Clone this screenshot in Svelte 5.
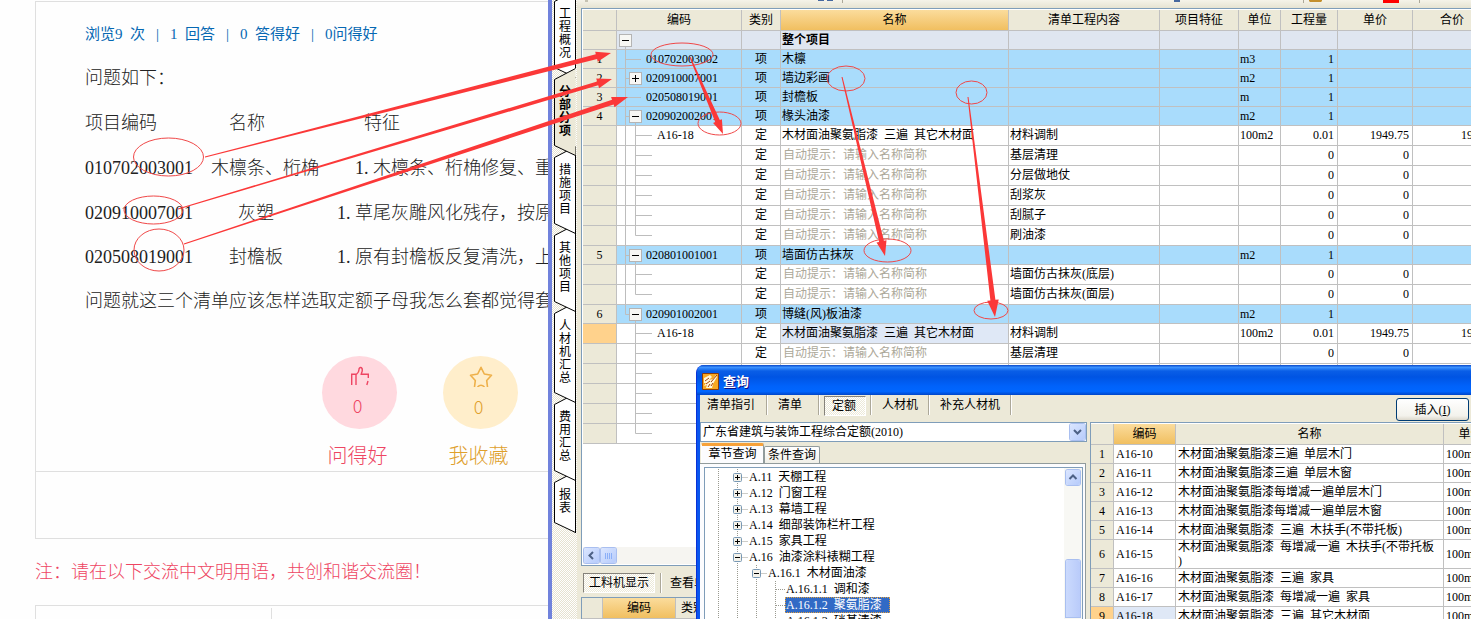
<script>
  const stats = ['浏览9  次', '1  回答', '0  答得好', '0问得好'];

  // A half-width space is half an em, two ordinary spaces of the Latin face.
  const sp = (n) => '\u00a0'.repeat(n * 2);
  const lines = [
    '问题如下：',
    '项目编码' + sp(8) + '名称' + sp(11) + '特征',
    '010702003001' + sp(2) + '木檩条、桁桷' + sp(4) + '1. 木檩条、桁桷修复、重',
    '020910007001' + sp(5) + '灰塑' + sp(7) + '1. 草尾灰雕风化残存，按原',
    '020508019001' + sp(4) + '封檐板' + sp(6) + '1. 原有封檐板反复清洗，上',
    '问题就这三个清单应该怎样选取定额子母我怎么套都觉得套'
  ];

  const sideTabs = ['工程概况', '分部分项', '措施项目', '其他项目', '人材机汇总', '费用汇总', '报表'];
  const activeTab = 1;
  const tabHeight = (t) => t.length * 13 + 15;

  const hint = '自动提示：请输入名称简称';
  const woodPaint = '木材面油聚氨脂漆  三遍  其它木材面';
  const item = (no, code, name, unit, tree) => ({ kind: 'item', no, code, type: '项', name, unit, qty: '1', tree });
  const sub = (content, tree, more = {}) => ({ kind: 'sub', type: '定', name: hint, hint: true, content, qty: '0', price: '0', tree, ...more });
  const quota = { code: 'A16-18', name: woodPaint, hint: false, unit: '100m2', qty: '0.01', price: '1949.75', total: '19.50' };
  const blank = (tree) => ({ kind: 'sub', name: '', tree });

  const rows = [
    { kind: 'root', name: '整个项目', tree: 'root' },
    item('1', '010702003002', '木檩', 'm3', 'leaf'),
    item('2', '020910007001', '墙边彩画', 'm2', 'plus'),
    item('3', '020508019001', '封檐板', 'm', 'leaf'),
    item('4', '020902002001', '椽头油漆', 'm2', 'minus'),
    sub('材料调制', 'child', quota),
    sub('基层清理', 'child'),
    sub('分层做地仗', 'child'),
    sub('刮浆灰', 'child'),
    sub('刮腻子', 'child'),
    sub('刷油漆', 'childEnd'),
    item('5', '020801001001', '墙面仿古抹灰', 'm2', 'minus'),
    sub('墙面仿古抹灰(底层)', 'child'),
    sub('墙面仿古抹灰(面层)', 'childEnd'),
    item('6', '020901002001', '博缝(风)板油漆', 'm2', 'minusEnd'),
    sub('材料调制', 'lone', { ...quota, current: true }),
    sub('基层清理', 'lone'),
    blank('lone'),
    blank('lone'),
    blank('lone'),
    blank('loneEnd')
  ];

  const treeLines = {
    root: 'M8.5 14V20',
    leaf: 'M8.5 0V20M8.5 9.5H24',
    plus: 'M8.5 0V20M8.5 9.5H12',
    minus: 'M8.5 0V20M8.5 9.5H12M18.5 15V20',
    minusEnd: 'M8.5 0V9.5H12M18.5 15V20',
    child: 'M8.5 0V20M18.5 0V20M18.5 9.5H35',
    childEnd: 'M8.5 0V20M18.5 0V9.5H35',
    lone: 'M18.5 0V20M18.5 9.5H35',
    loneEnd: 'M18.5 0V9.5H35'
  };
  const boxAt = { root: 2, plus: 12, minus: 12, minusEnd: 12 };

  const queryTabs = ['清单指引', '清单', '定额', '人材机', '补充人材机'];

  const chapters = [
    { level: 1, open: false, text: 'A.11  天棚工程' },
    { level: 1, open: false, text: 'A.12  门窗工程' },
    { level: 1, open: false, text: 'A.13  幕墙工程' },
    { level: 1, open: false, text: 'A.14  细部装饰栏杆工程' },
    { level: 1, open: false, text: 'A.15  家具工程' },
    { level: 1, open: true, text: 'A.16  油漆涂料裱糊工程' },
    { level: 2, open: true, text: 'A.16.1  木材面油漆' },
    { level: 3, text: 'A.16.1.1  调和漆' },
    { level: 3, text: 'A.16.1.2  聚氨脂漆', selected: true },
    { level: 3, text: 'A.16.1.3  硝基清漆' }
  ];

  const quotas = [
    ['A16-10', '木材面油聚氨脂漆三遍  单层木门'],
    ['A16-11', '木材面油聚氨脂漆三遍  单层木窗'],
    ['A16-12', '木材面油聚氨脂漆每增减一遍单层木门'],
    ['A16-13', '木材面油聚氨脂漆每增减一遍单层木窗'],
    ['A16-14', '木材面油聚氨脂漆  三遍  木扶手(不带托板)'],
    ['A16-15', '木材面油聚氨脂漆  每增减一遍  木扶手(不带托板\n)'],
    ['A16-16', '木材面油聚氨脂漆  三遍  家具'],
    ['A16-17', '木材面油聚氨脂漆  每增减一遍  家具'],
    ['A16-18', '木材面油聚氨脂漆  三遍  其它木材面']
  ];

  const ellipses = [
    [168.5, 157, 35, 19], [153.5, 210, 29.5, 14], [159, 250, 25, 21],
    [682, 54.5, 31, 11.5], [719.5, 123.5, 21.5, 11.5], [846, 78.5, 19, 12.5],
    [971.5, 92.5, 15.5, 11.5], [887.5, 250.5, 23.5, 11.5], [991, 310.5, 17, 8.5]
  ];

  // Tapered arrow: thin at the tail, swept head at the tip.
  function arrow([x1, y1, x2, y2, w, head]) {
    const len = Math.hypot(x2 - x1, y2 - y1);
    const ux = (x2 - x1) / len, uy = (y2 - y1) / len;
    const at = (d, s) => `${(x1 + ux * d - uy * s).toFixed(1)},${(y1 + uy * d + ux * s).toFixed(1)}`;
    const neck = len - head;
    return [at(0, 0.5), at(neck, w / 2), at(neck, head * 0.34), at(len, 0),
      at(neck, -head * 0.34), at(neck, -w / 2), at(0, -0.5)].join(' ');
  }
  const arrows = [
    [205, 157, 611, 53, 5, 15], [178, 209, 612, 79, 4, 15], [184, 244, 628, 97, 5, 16],
    [690, 57, 723, 134, 5, 14], [842, 77, 885, 256, 5, 15], [968, 97, 995, 317, 5, 17]
  ];
</script>

<div class="desk">
  <main class="page">
    <section class="card">
      <div class="question">
        <p class="stats">
          {#each stats as s, i}
            {#if i}<span class="bar">|</span>{/if}<a href="#stats">{s}</a>
          {/each}
        </p>
        {#each lines as l}<p class="line">{l}</p>{/each}
      </div>
      <div class="votes">
        <button class="vote good">
          <span class="disc">
            <svg width="20" height="20" viewBox="0 0 20 20" fill="none" stroke="#ee4562" stroke-width="1.4">
              <path d="M1.7 19V8.300H6V19M6.500 8.300C8 7 9 5.500 9 3.400C9 .8 12.300 .8 12.300 4C12.300 6 11.400 7 11.200 8.300H18.300V12M18 15L16.800 19" />
            </svg>
            <b>0</b>
          </span>
          <span class="label">问得好</span>
        </button>
        <button class="vote fav">
          <span class="disc">
            <svg width="24" height="21" viewBox="0 0 24 21" fill="none" stroke="#eeb04a" stroke-width="1.600" stroke-linejoin="round">
              <path d="M5.500 21L6.300 14.500L1.500 9.300L8.700 8L12 1.300L15.300 8L22.500 9.300L17.700 14.500L18.500 21M8.500 21Q12 17.500 15.500 21" />
            </svg>
            <b>0</b>
          </span>
          <span class="label">我收藏</span>
        </button>
      </div>
      <div class="card-foot"></div>
    </section>
    <p class="note">注：请在以下交流中文明用语，共创和谐交流圈！</p>
    <section class="reply"><div></div></section>
  </main>

  <div class="app">
    <nav class="side">
      {#each sideTabs as t, i}
        {@const h = tabHeight(t)}
        <button class:on={i === activeTab} style="z-index: {i === activeTab ? 9 : 8 - i}">
          <svg width="22" height={h} viewBox="0 0 22 {h}">
            <path d="M21.500 -10.500L.5 .5V{h - 0.5}L21.500 {h + 9.5}" fill={i === activeTab ? '#ece9d8' : '#fff'} stroke="#000" />
            {#if i !== activeTab}<path d="M21.500 -10.500V{h + (i < activeTab ? 0 : 10)}" stroke="#000" />{/if}
          </svg>
          <span>{t}</span>
        </button>
      {/each}
    </nav>

    <div class="work">
      <div class="strip">
        <svg width="100%" height="8">
          <path d="M8 0h3v2h-3z" fill="#c5c2b2" />
          <path d="M241 0h6v1h-6zM250 0h6v1h-6zM597 0h6v2h-6z" fill="#46689f" />
          <path d="M265 0h1v3h-1zM726 0h1v3h-1zM842 0h1v3h-1z" fill="#aca899" />
          <path d="M732 0h13v1l-1 1h-11l-1-1z" fill="#c48f2c" />
          <path d="M806 0h16v3h-16z" fill="#f00" />
        </svg>
      </div>

      <div class="frame">
        <div class="scroller">
          <table class="bill">
            <colgroup>
              <col style="width:34px" /><col style="width:125px" /><col style="width:39px" /><col style="width:228px" /><col style="width:151px" />
              <col style="width:79px" /><col style="width:42px" /><col style="width:57px" /><col style="width:75px" /><col style="width:79px" />
            </colgroup>
            <thead>
              <tr>
                <th></th><th>编码</th><th>类别</th><th class="hot">名称</th><th>清单工程内容</th>
                <th>项目特征</th><th>单位</th><th>工程量</th><th>单价</th><th>合价</th>
              </tr>
            </thead>
            <tbody>
              {#each rows as r}
                <tr class={r.kind} class:current={r.current}>
                  <th>{r.no ?? ''}</th>
                  <td class="code">
                    <div>
                      <svg width="40" height="20" viewBox="0 0 40 20" fill="none">
                        <path d={treeLines[r.tree]} stroke="#bdbdbd" />
                        {#if r.tree in boxAt}
                          {@const x = boxAt[r.tree]}
                          <rect x={x + 0.5} y="3.500" width="12" height="12" fill="#f7f7f4" stroke="#b4b4b4" />
                          <path d={`M${x + 3} 9.500h7` + (r.tree === 'plus' ? `M${x + 6.5} 6v7` : '')} stroke="#000" />
                        {/if}
                      </svg>
                      <span class:item={r.kind === 'item'}>{r.code ?? ''}</span>
                    </div>
                  </td>
                  <td class="mid">{r.type ?? ''}</td>
                  <td class="name" class:hint={r.hint}>{r.name}</td>
                  <td>{r.content ?? ''}</td>
                  <td></td>
                  <td>{r.unit ?? ''}</td>
                  <td class="num">{r.qty ?? ''}</td>
                  <td class="num">{r.price ?? ''}</td>
                  <td class="num">{r.total ?? ''}</td>
                </tr>
              {/each}
            </tbody>
          </table>
        </div>
        <div class="hscroll">
          <button aria-label="左移"><svg width="15" height="15" fill="none" stroke="#4d6185" stroke-width="2"><path d="M9 4L5.500 7.500L9 11" /></svg></button>
          <button aria-label="滑块"><svg width="15" height="15"><path d="M4.500 5v6M6.500 5v6M8.500 5v6M10.500 5v6" stroke="#8cb0f8" /></svg></button>
        </div>
      </div>

      <div class="lower-bar">
        <button class="pressed">工料机显示</button>
        <i class="sep"></i>
        <button>查看单</button>
      </div>
      <table class="lower">
        <colgroup><col style="width:21px" /><col style="width:73px" /><col style="width:60px" /><col /></colgroup>
        <thead><tr><th></th><th class="hot">编码</th><th class="left">类别</th><th></th></tr></thead>
      </table>
    </div>

    <section class="dialog">
      <header>
        <svg width="17" height="17" viewBox="0 0 17 17">
          <rect width="17" height="17" rx="1" fill="#8a3b0a" />
          <rect x="1" y="1" width="15" height="15" fill="#f7a823" />
          <path d="M2 5l6-3 2 2-3 3 4-1 3-4 1 2-4 7-1 4H4l1-3-3 1 2-3H2z" fill="#fff6d8" />
          <path d="M3 8l4-3M4 11l4-3M6 14l2-3M9 9l6-7M9 13l2-3" stroke="#a5400c" />
        </svg>
        <h2>查询</h2>
      </header>
      <div class="dialog-body">
        <div class="dialog-bar">
          <nav>
            {#each queryTabs as q}<button class:pressed={q === '定额'}>{q}</button><i class="sep"></i>{/each}
          </nav>
          <button class="insert">插入(<u>I</u>)</button>
        </div>
        <div class="panes">
          <div class="left-pane">
            <label class="combo">
              <select aria-label="定额库"><option>广东省建筑与装饰工程综合定额(2010)</option></select>
              <span><svg width="15" height="16" fill="none" stroke="#4d6185" stroke-width="2"><path d="M4 6L7.500 9.500L11 6" /></svg></span>
            </label>
            <div class="tabs"><button class="on">章节查询</button><button>条件查询</button></div>
            <div class="tab-panel">
              <div class="tree">
                <ul>
                  {#each chapters as c, i}
                    {@const bx = 32.5 + (c.level - 1) * 19}
                    <li>
                      <svg width={c.level === 3 ? 80 : 43 + (c.level - 1) * 19} height="16" fill="none">
                        <path
                          d={'M13.500 0V16M32.500 0V16' + (c.level > 1 ? 'M51.500 0V16' : '') + (c.level === 3 ? 'M70.500 0V16M71 8.500H80' : `M${bx} 8.500h12`)}
                          stroke="#9a9a90" stroke-dasharray="1 1" />
                        {#if c.level < 3}
                          <rect x={bx - 4} y="4.500" width="8" height="8" rx="1" fill="#f4f2ea" stroke="#7898b5" />
                          <path d={`M${bx - 2.5} 8.500h5` + (c.open ? '' : `M${bx} 6v5`)} stroke="#000" />
                        {/if}
                      </svg>
                      <span class:selected={c.selected}>{c.text}</span>
                    </li>
                  {/each}
                </ul>
                <div class="vscroll">
                  <button aria-label="上移"><svg width="14" height="15" fill="none" stroke="#4d6185" stroke-width="2"><path d="M3.500 9L7 5.500L10.500 9" /></svg></button>
                  <div class="thumb"></div>
                </div>
              </div>
            </div>
          </div>
          <div class="right-pane">
            <table class="quota">
              <colgroup><col style="width:23px" /><col style="width:62px" /><col style="width:268px" /><col style="width:54px" /></colgroup>
              <thead><tr><th></th><th class="hot">编码</th><th>名称</th><th>单位</th></tr></thead>
              <tbody>
                {#each quotas as [code, name], i}
                  <tr class:current={i === 8}>
                    <th>{i + 1}</th><td>{code}</td><td class="wrap">{name}</td><td>100m2</td>
                  </tr>
                {/each}
              </tbody>
            </table>
          </div>
        </div>
      </div>
    </section>
  </div>

  <svg class="marks" aria-hidden="true">
    {#each ellipses as [cx, cy, rx, ry]}
      <ellipse {cx} {cy} {rx} {ry} fill="none" stroke="#f04848" />
    {/each}
    {#each arrows as a}<polygon points={arrow(a)} fill="#fb3838" />{/each}
  </svg>
</div>

<style>
  :global(body) { overflow: hidden; }
  * { box-sizing: border-box; }
  .desk {
    position: relative;
    display: grid;
    grid-template-columns: minmax(0, 548fr) minmax(0, 923fr);
    height: 100vh;
    overflow: hidden;
    font: 12px/16px "Liberation Serif", "Noto Sans CJK SC", serif;
    color: #000;
    background: #fff;
  }
  button {
    font: inherit;
    color: inherit;
    margin: 0;
    padding: 0;
    border: 0;
    background: none;
    white-space: nowrap;
  }
  p, h2, ul { margin: 0; padding: 0; }
  svg { display: block; flex: none; }

  /* question page */
  .page { overflow: hidden; padding: 1px 0 0 35px; background: #fefefe; color: #222; }
  .card { border: 1px solid #dfdfdf; border-right: 0; }
  .question { padding: 20px 0 0 49px; height: 345px; }
  .stats { display: flex; gap: 11px; font-size: 15px; line-height: 24px; margin-bottom: 10px; color: #0668b3; white-space: pre; }
  .stats a { color: inherit; text-decoration: none; }
  .line { font-size: 18px; line-height: 45px; height: 45px; white-space: nowrap; font-weight: 300; }
  .question .line:nth-of-type(n + 6) { margin-top: -1px; }
  .votes { display: flex; gap: 46px; padding: 9px 0 0 286px; height: 125px; border-bottom: 1px solid #dfdfdf; }
  .vote { display: flex; flex-direction: column; align-items: center; width: 75px; font-size: 20px; line-height: 30px; gap: 12px; font-weight: 300; }
  .disc { display: flex; flex-direction: column; align-items: center; gap: 5px; width: 75px; height: 75px; border-radius: 50%; padding-top: 10px; }
  .disc b { font: 300 18px/28px "Noto Sans CJK SC", sans-serif; }
  .disc b, .label { margin-right: 4px; }
  .good { color: #ee4562; }
  .good .disc { background: #ffd9df; }
  .fav { color: #dfa02c; }
  .fav .disc { background: #ffeecb; }
  .card-foot { height: 66px; }
  .note { font-size: 18px; line-height: 66px; color: #ee4562; white-space: nowrap; font-weight: 300; }
  .reply { border: 1px solid #dfdfdf; border-right: 0; padding-top: 2px; height: 60px; }
  .reply div { width: 236px; height: 100%; border-right: 1px solid #dfdfdf; }

  /* estimating program */
  .app { position: relative; display: flex; background: #ece9d8; overflow: hidden; }
  .side {
    flex: none;
    display: flex;
    flex-direction: column;
    gap: 11px;
    width: 29px;
    padding: 1px 0 0 2px;
    border-left: 4px solid #7082dc;
    background: repeating-conic-gradient(#e6e2d0 0 25%, #fff 0 50%) 0 0 / 2px 2px;
  }
  .side button { position: relative; display: block; padding: 7px 0 8px 5px; text-align: left; width: 22px; }
  .side button svg { position: absolute; left: 0; top: 0; overflow: visible; }
  .side button span { position: relative; display: block; width: 13px; line-height: 13px; white-space: normal; word-break: break-all; }
  .side .on { font-weight: 700; }
  .work { flex: 1; min-width: 0; display: flex; flex-direction: column; }
  .strip { height: 8px; background: linear-gradient(#f5f3e9, #e6e3d2); }
  .frame { margin-left: 4px; border: 1px solid #7f9db9; border-right: 0; padding: 1px 0 1px 1px; background: #fff; }
  .scroller { overflow: hidden; height: 537px; }
  table { border-spacing: 0; table-layout: fixed; }
  th, td { padding: 0 1px; height: 19px; border: 0 solid #c0c0c0; border-width: 0 1px 1px 0; font-weight: 400; line-height: 17px; overflow: hidden; white-space: pre; text-align: left; }
  th { background: #ece9d8; text-align: center; }
  thead th { height: 21px; }
  thead .hot { background: linear-gradient(#fbdc9c, #f1bf60); }
  .bill { width: 909px; }
  .code { padding: 0; }
  .code div { display: flex; height: 18px; overflow: hidden; }
  .code span { line-height: 18px; }
  .code .item { margin-left: -11px; }
  .root td { background: #dfe6f0; font-weight: 700; }
  .item td { background: #a9dcfc; }
  .sub th, .sub td { height: 20px; }
  .sub .code div { height: 19px; }
  .mid { text-align: center; }
  td.hint { color: #aca899; padding-left: 2px; }
  .num { text-align: right; padding-right: 3px; }
  .current th { background: #ffd28c; }
  .bill .current .name, .quota .current td:nth-child(2) { background: #dfe8f6; }
  .hscroll { display: flex; gap: 2px; padding: 1px; height: 17px; background: #f6f5f1; }
  .hscroll button, .vscroll button, .combo span { background: linear-gradient(135deg, #dbe6ff, #b6cbfb); border-radius: 2px; box-shadow: 0 0 0 1px #a9bff0; }
  .hscroll button { height: 15px; }
  .lower-bar { display: flex; align-items: center; gap: 5px; height: 31px; padding: 6px 0 3px 6px; }
  .pressed { border: 1px solid; border-color: #85827a #fff #fff #85827a; background: repeating-conic-gradient(#ece9d8 0 25%, #fff 0 50%) 0 0 / 2px 2px; }
  .lower-bar .pressed { height: 20px; padding: 0 5px; }
  .sep { width: 2px; height: 20px; border-left: 1px solid #aca899; background: #fff; }
  .lower-bar .sep { margin-right: 3px; }
  .lower { width: 100%; margin-left: 4px; border: solid #7f9db9; border-width: 1px 0 0 1px; }
  .lower .left { text-align: left; padding-left: 5px; }

  /* query window */
  .dialog {
    position: absolute;
    z-index: 20;
    left: 148px;
    top: 365px;
    right: 0;
    bottom: 0;
    display: flex;
    flex-direction: column;
    border-left: 1px solid #0831d9;
    border-top-left-radius: 8px;
    background: #0a56ee;
    overflow: hidden;
  }
  .dialog header { flex: none; display: flex; align-items: center; gap: 4px; height: 30px; padding: 2px 0 0 5px; background: linear-gradient(#0a48c8, #3c92ff 8%, #0a5ee6 20%, #0054e3 40%, #0062fa 70%, #0066ff 88%, #0045c8); }
  h2 { font: 700 13px/20px "Noto Sans CJK SC", sans-serif; color: #fff; text-shadow: 1px 1px #0f1089; }
  .dialog-body { flex: 1; min-height: 0; display: flex; flex-direction: column; margin-left: 3px; background: #ece9d8; }
  .dialog-bar { flex: none; display: flex; justify-content: space-between; height: 27px; padding-right: 2px; }
  nav { display: flex; }
  .dialog-bar nav button { height: 20px; padding: 0 10px; }
  .dialog-bar nav button:first-child { padding-left: 7px; padding-right: 11px; }
  .dialog-bar nav button:nth-of-type(2) { padding-right: 16px; padding-left: 10px; }
  .dialog-bar nav .pressed { padding: 0 8px 0 6px; margin: 1px 4px 0 4px; height: 20px; width: 42px; }
  .insert { width: 73px; height: 23px; margin-top: 3px; border: 1px solid #003c74; border-radius: 3px; background: linear-gradient(#fff, #f3f2ec 80%, #dcd8cc); }
  .panes { flex: 1; min-height: 0; display: flex; gap: 3px; }
  .left-pane { flex: 0 0 387px; min-width: 0; display: flex; flex-direction: column; }
  .combo { position: relative; flex: none; display: block; height: 20px; }
  .combo select { width: 100%; height: 20px; padding: 0 2px; font: inherit; line-height: 18px; color: #000; appearance: none; border: 1px solid #7f9db9; border-radius: 0; background: #fff; }
  .combo span { position: absolute; right: 2px; top: 2px; pointer-events: none; }
  .tabs { flex: none; display: flex; align-items: flex-end; height: 21px; padding-left: 1px; }
  .tabs button { width: 56px; height: 17px; border: 1px solid #919b9c; border-bottom: 0; border-radius: 2px 2px 0 0; background: linear-gradient(#fff, #f0efe8); line-height: 16px; }
  .tabs .on { width: 63px; height: 20px; border-top: 3px solid #f7a23a; border-left-color: #fff; background: #fcfcfe; line-height: 15px; }
  .tab-panel { flex: 1; min-height: 0; display: flex; margin-right: 1px; padding: 3px 2px 0 4px; border: 1px solid #919b9c; border-width: 1px 1px 0 0; background: #fcfcfe; }
  .tree { flex: 1; display: flex; border: 1px solid #7f9db9; border-bottom: 0; background: #fff; overflow: hidden; }
  ul { flex: 1; list-style: none; padding-top: 1px; }
  li { display: flex; height: 16px; white-space: pre; }
  li span { line-height: 16px; padding: 0 1px; }
  .selected { color: #fff; background: #316ac5; outline: 1px dotted #e0a040; outline-offset: -1px; padding-right: 8px; }
  .vscroll { width: 18px; padding: 2px; background: #f8f8f4; display: flex; flex-direction: column; }
  .vscroll button { height: 15px; width: 14px; }
  .thumb { flex: 1; margin-top: 75px; border-radius: 2px 2px 0 0; background: linear-gradient(90deg, #cbdafd, #b9cbfa); box-shadow: 0 0 0 1px #a9bff0; }
  .right-pane { flex: 1; min-width: 0; overflow: hidden; border: solid #7f9db9; border-width: 1px 0 0 1px; background: #fff; }
  .quota { width: 407px; margin-top: 1px; }
  .quota td { white-space: pre; padding: 0 2px; }
  .quota .wrap { line-height: 14px; }

  .marks { position: absolute; z-index: 30; inset: 0; width: 100%; height: 100%; pointer-events: none; }
</style>
